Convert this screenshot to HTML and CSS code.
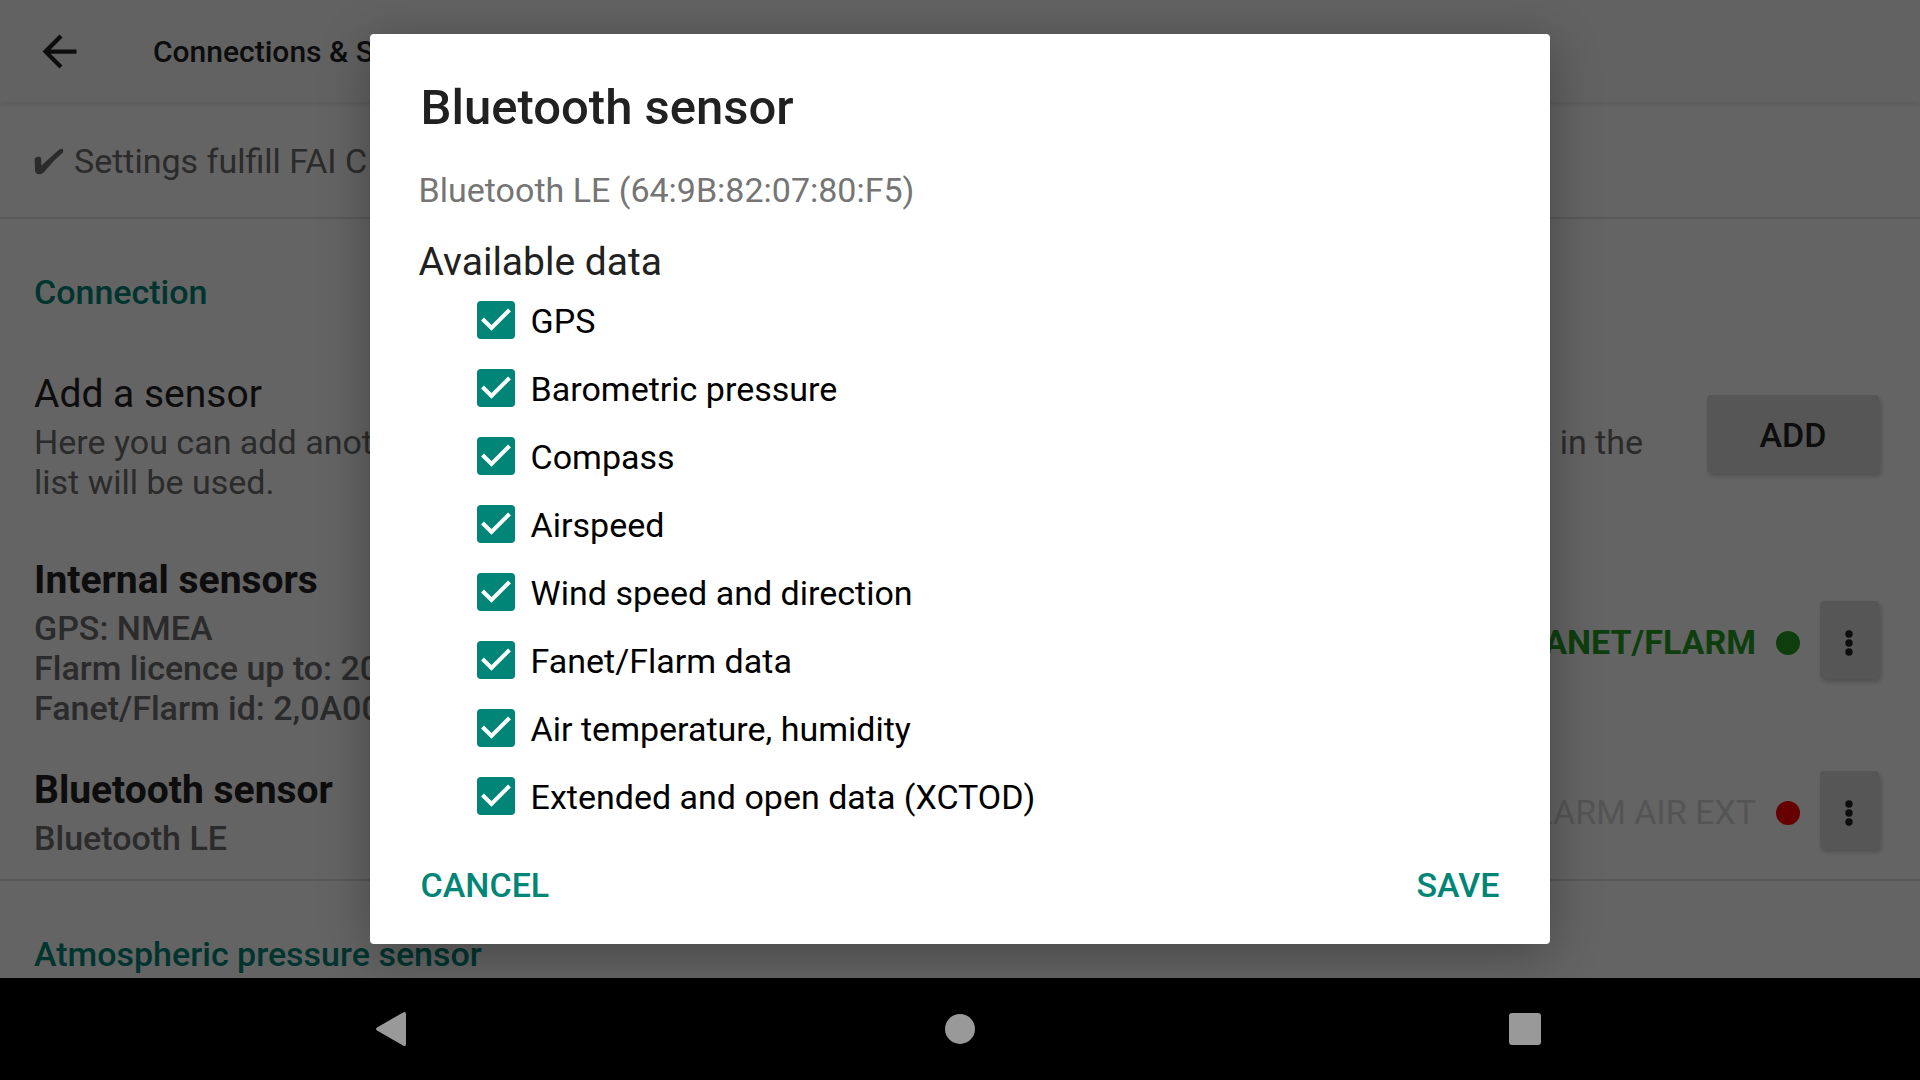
FILE: index.html
```html
<!DOCTYPE html>
<html lang="en">
<head>
<meta charset="utf-8">
<title>Connections &amp; Sensors</title>
<link rel="stylesheet" href="styles.css">
</head>
<body>
<div class="screen">
  <div class="app">
    <header class="app-bar">
      <button class="icon-button" type="button" aria-label="Back">
        <svg class="arrow" viewBox="0 0 24 24" aria-hidden="true"><path d="M20 11H7.83l5.59-5.59L12 4l-8 8 8 8 1.41-1.41L7.83 13H20z"/></svg>
      </button>
      <h1 class="app-title">Connections &amp; Sensors</h1>
    </header>

    <main class="settings">
      <p class="status">
        <svg class="status-tick" viewBox="105 448 89 80" aria-hidden="true"><path d="M107 480Q110 474 118 474Q126 473 126 479L127 500L178 454Q184 449 190 450Q193 452 191 461Q162 485 135 519Q128 527 120 526Q109 525 108 514Z"/></svg>
        <span>Settings fulfill FAI CIVL rules</span>
      </p>

      <section class="group">
        <h2 class="group-title">Connection</h2>
        <div class="row row-add">
          <div class="row-text">
            <h3 class="row-title">Add a sensor</h3>
            <p class="row-line row-split"><span>Here you can add another sensor.</span><span>The first one in the</span></p>
            <p class="row-line">list will be used.</p>
          </div>
          <button class="raised raised-wide" type="button">ADD</button>
        </div>
        <div class="row row-internal">
          <div class="row-text">
            <h3 class="row-title strong">Internal sensors</h3>
            <p class="row-line medium">GPS: NMEA</p>
            <p class="row-line medium">Flarm licence up to: 2025</p>
            <p class="row-line medium">Fanet/Flarm id: 2,0A0000</p>
          </div>
          <span class="data data-on">FANET/FLARM</span>
          <span class="dot dot-on"></span>
          <button class="raised raised-more" type="button" aria-label="More">
            <svg class="more" viewBox="0 0 8 26" aria-hidden="true"><circle cx="4" cy="4" r="3.7"/><circle cx="4" cy="13" r="3.7"/><circle cx="4" cy="22" r="3.7"/></svg>
          </button>
        </div>
        <div class="row row-bluetooth">
          <div class="row-text">
            <h3 class="row-title strong">Bluetooth sensor</h3>
            <p class="row-line medium">Bluetooth LE</p>
          </div>
          <span class="data data-off">FLARM AIR EXT</span>
          <span class="dot dot-off"></span>
          <button class="raised raised-more" type="button" aria-label="More">
            <svg class="more" viewBox="0 0 8 26" aria-hidden="true"><circle cx="4" cy="4" r="3.7"/><circle cx="4" cy="13" r="3.7"/><circle cx="4" cy="22" r="3.7"/></svg>
          </button>
        </div>
      </section>

      <section class="group">
        <h2 class="group-title">Atmospheric pressure sensor</h2>
      </section>
    </main>

    <div class="scrim">
      <form class="dialog" role="dialog" aria-labelledby="dialog-title">
        <h2 class="dialog-title" id="dialog-title">Bluetooth sensor</h2>
        <p class="dialog-device">Bluetooth LE (64:9B:82:07:80:F5)</p>
        <fieldset class="options">
          <legend class="options-title">Available data</legend>
          <label class="option"><input type="checkbox" checked><span>GPS</span></label>
          <label class="option"><input type="checkbox" checked><span>Barometric pressure</span></label>
          <label class="option"><input type="checkbox" checked><span>Compass</span></label>
          <label class="option"><input type="checkbox" checked><span>Airspeed</span></label>
          <label class="option"><input type="checkbox" checked><span>Wind speed and direction</span></label>
          <label class="option"><input type="checkbox" checked><span>Fanet/Flarm data</span></label>
          <label class="option"><input type="checkbox" checked><span>Air temperature, humidity</span></label>
          <label class="option"><input type="checkbox" checked><span>Extended and open data (XCTOD)</span></label>
        </fieldset>
        <div class="dialog-actions">
          <button class="flat" type="button">CANCEL</button>
          <button class="flat" type="button">SAVE</button>
        </div>
      </form>
    </div>
  </div>

  <nav class="nav-bar" aria-label="System">
    <button class="nav-button" type="button" aria-label="Back">
      <svg class="nav-icon" viewBox="0 0 40 40" aria-hidden="true"><path d="M2 18.500Q0 20 2 21.500L28 36.500Q31 38 31 35V5Q31 2 28 3.500Z"/></svg>
    </button>
    <button class="nav-button" type="button" aria-label="Home">
      <svg class="nav-icon" viewBox="0 0 40 40" aria-hidden="true"><circle cx="20" cy="20" r="15"/></svg>
    </button>
    <button class="nav-button" type="button" aria-label="Recent apps">
      <svg class="nav-icon" viewBox="0 0 40 40" aria-hidden="true"><rect x="4" y="4" width="32" height="32" rx="3"/></svg>
    </button>
  </nav>
</div>
</body>
</html>
```
FILE: styles.css
```css
* {
  box-sizing: border-box;
}

body,
h1,
h2,
h3,
p {
  margin: 0;
}

body {
  font-family: Roboto, sans-serif;
  font-size: 34px;
  line-height: 40px;
  color: #212121;
}

button {
  padding: 0;
  border: 0;
  background: none;
  font: inherit;
  color: inherit;
}

svg {
  display: block;
  fill: currentColor;
}

.screen {
  display: flex;
  flex-direction: column;
  height: 100vh;
  background: #000;
}

.app {
  position: relative;
  flex: 1;
  min-height: 0;
  overflow: hidden;
  background: #fafafa;
}

/* Settings screen */

.app-bar {
  position: relative;
  display: flex;
  align-items: center;
  gap: 68px;
  height: 102px;
  padding: 0 34px;
  background: #f5f5f5;
  box-shadow: 0 2px 6px rgba(0, 0, 0, 0.1);
}

.arrow {
  width: 51px;
  height: 51px;
}

.app-title {
  padding-top: 2px;
  font-size: 30px;
  font-weight: 500;
}

.status {
  display: flex;
  align-items: center;
  gap: 10px;
  padding: 39px 34px 36px;
  border-bottom: 2px solid #dcdcdc;
  color: #6b6b6b;
}

.status-tick {
  width: 30px;
  height: 27px;
}

.group {
  padding: 53px 41px 21px 34px;
  border-bottom: 2px solid #dcdcdc;
}

.group-title {
  font-size: 34px;
  font-weight: 500;
  color: #008577;
}

.row {
  display: flex;
  align-items: center;
}

.row-add {
  gap: 64px;
  margin-top: 60px;
}

.row-internal {
  margin-top: 56px;
}

.row-bluetooth {
  margin-top: 40px;
}

.row-text {
  flex: 1;
}

.row-title {
  margin-bottom: 6px;
  font-size: 39px;
  line-height: 44px;
  font-weight: 400;
}

.row-title.strong {
  font-weight: 700;
}

.row-line {
  color: #6b6b6b;
}

.row-split {
  display: flex;
  justify-content: space-between;
}

.medium {
  font-weight: 500;
}

.raised {
  flex: none;
  display: flex;
  align-items: center;
  justify-content: center;
  height: 78px;
  margin-bottom: 6px;
  border-radius: 4px;
  background: #d6d7d7;
  font-weight: 500;
  box-shadow: 2px 3px 5px rgba(0, 0, 0, 0.2);
}

.raised-wide {
  width: 172px;
  padding-top: 2px;
}

.raised-more {
  width: 59px;
  padding: 5px 2px 0 0;
}

.more {
  width: 8px;
  height: 26px;
}

.data {
  margin: 0 20px 3px 0;
}

.data-on {
  font-weight: 700;
  color: #239b23;
}

.data-off {
  color: #d2d2d2;
}

.dot {
  width: 24px;
  height: 24px;
  margin-right: 20px;
  border-radius: 50%;
}

.dot-on {
  background: #239b23;
}

.dot-off {
  background: #f00;
}

/* Dialog */

.scrim {
  position: absolute;
  inset: 0;
  display: flex;
  align-items: center;
  justify-content: center;
  background: rgba(0, 0, 0, 0.6);
}

.dialog {
  width: 61.5%;
  padding: 44px 49px 39px;
  border-radius: 4px;
  background: #fff;
  box-shadow: 0 10px 50px rgba(0, 0, 0, 0.3);
}

.dialog-title {
  margin-bottom: 32px;
  padding: 0 2px;
  font-size: 49px;
  line-height: 60px;
  font-weight: 500;
}

.dialog-device {
  margin-bottom: 30px;
  color: #757575;
}

.options {
  min-width: 0;
  margin: 0;
  padding: 0;
  border: 0;
}

.options-title {
  margin-bottom: 2px;
  padding: 0;
  font-size: 39px;
  line-height: 44px;
}

.option {
  display: flex;
  align-items: center;
  gap: 16px;
  height: 68px;
  padding-left: 58px;
  color: #000;
}

.option span {
  padding-top: 2px;
}

.option input {
  appearance: none;
  width: 38px;
  height: 38px;
  margin: 0;
  border: 2px solid #757575;
  border-radius: 4px;
}

.option input:checked {
  border: 0;
  background: #008577 url("data:image/svg+xml,%3Csvg xmlns='http://www.w3.org/2000/svg' viewBox='0 0 38 38'%3E%3Cpath d='M5.500 18L14.500 27L32.500 9' fill='none' stroke='%23fff' stroke-width='4'/%3E%3C/svg%3E");
}

.dialog-actions {
  display: flex;
  justify-content: space-between;
  margin-top: 35px;
  padding: 0 2px;
}

.flat {
  font-weight: 500;
  color: #008577;
}

/* System navigation */

.nav-bar {
  display: flex;
  height: 102px;
  padding: 0 112px;
  color: #999;
}

.nav-button {
  flex: 1;
  display: flex;
  align-items: center;
  justify-content: center;
}

.nav-icon {
  width: 40px;
  height: 40px;
}
```
